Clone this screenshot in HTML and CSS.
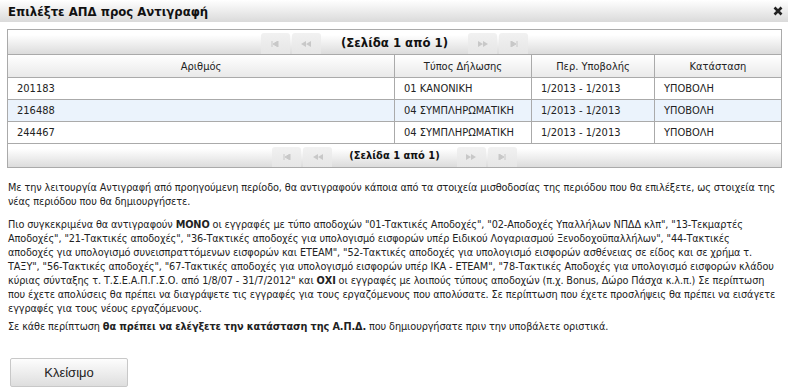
FILE: index.html
```html
<!DOCTYPE html>
<html lang="el">
<head>
    <meta charset="UTF-8">
    <meta name="viewport" content="width=device-width, initial-scale=1.0">
    <link rel="stylesheet" href="styles.css">
</head>
<body>
    <div class="dialog">
        <div class="dialog-title">
            <span>Επιλέξτε ΑΠΔ προς Αντιγραφή</span>
            <svg class="close" width="10" height="10" viewBox="0 0 10 10"><path d="M1.5 1.5 L8.5 8.5 M8.5 1.5 L1.5 8.5" stroke="#222" stroke-width="2.6"/></svg>
        </div>
        <div class="dialog-body">
            <div class="grid">
                <div class="pager pager-top">
                    <div class="pg-btn"><svg width="8" height="6" viewBox="0 0 8 6"><path d="M1 0v6M7 0v6L2 3z" stroke="#c8c8c8" fill="#c8c8c8" stroke-width="1"/></svg></div>
                    <div class="pg-btn"><svg width="10" height="6" viewBox="0 0 10 6"><path d="M5 0v6L0 3zM10 0v6L5 3z" fill="#c8c8c8"/></svg></div>
                    <div class="pg-text">(Σελίδα 1 από 1)</div>
                    <div class="pg-btn"><svg width="10" height="6" viewBox="0 0 10 6"><path d="M0 0v6L5 3zM5 0v6L10 3z" fill="#c8c8c8"/></svg></div>
                    <div class="pg-btn"><svg width="8" height="6" viewBox="0 0 8 6"><path d="M7 0v6M1 0v6L6 3z" stroke="#c8c8c8" fill="#c8c8c8" stroke-width="1"/></svg></div>
                </div>
                <table class="rows">
                    <thead>
                        <tr>
                            <th class="c1">Αριθμός</th>
                            <th class="c2">Τύπος Δήλωσης</th>
                            <th class="c3">Περ. Υποβολής</th>
                            <th class="c4">Κατάσταση</th>
                        </tr>
                    </thead>
                    <tbody>
                        <tr>
                            <td>201183</td>
                            <td>01 ΚΑΝΟΝΙΚΗ</td>
                            <td>1/2013 - 1/2013</td>
                            <td>ΥΠΟΒΟΛΗ</td>
                        </tr>
                        <tr class="selected">
                            <td>216488</td>
                            <td>04 ΣΥΜΠΛΗΡΩΜΑΤΙΚΗ</td>
                            <td>1/2013 - 1/2013</td>
                            <td>ΥΠΟΒΟΛΗ</td>
                        </tr>
                        <tr>
                            <td>244467</td>
                            <td>04 ΣΥΜΠΛΗΡΩΜΑΤΙΚΗ</td>
                            <td>1/2013 - 1/2013</td>
                            <td>ΥΠΟΒΟΛΗ</td>
                        </tr>
                    </tbody>
                </table>
                <div class="pager pager-bottom">
                    <div class="pg-btn"><svg width="8" height="6" viewBox="0 0 8 6"><path d="M1 0v6M7 0v6L2 3z" stroke="#c8c8c8" fill="#c8c8c8" stroke-width="1"/></svg></div>
                    <div class="pg-btn"><svg width="10" height="6" viewBox="0 0 10 6"><path d="M5 0v6L0 3zM10 0v6L5 3z" fill="#c8c8c8"/></svg></div>
                    <div class="pg-text">(Σελίδα 1 από 1)</div>
                    <div class="pg-btn"><svg width="10" height="6" viewBox="0 0 10 6"><path d="M0 0v6L5 3zM5 0v6L10 3z" fill="#c8c8c8"/></svg></div>
                    <div class="pg-btn"><svg width="8" height="6" viewBox="0 0 8 6"><path d="M7 0v6M1 0v6L6 3z" stroke="#c8c8c8" fill="#c8c8c8" stroke-width="1"/></svg></div>
                </div>
            </div>

            <p class="info info-first">Με την λειτουργία Αντιγραφή από προηγούμενη περίοδο, θα αντιγραφούν κάποια από τα στοιχεία μισθοδοσίας της περιόδου που θα επιλέξετε, ως στοιχεία της νέας περιόδου που θα δημιουργήσετε.</p>
            <p class="info info-details">Πιο συγκεκριμένα θα αντιγραφούν <b>ΜΟΝΟ</b> οι εγγραφές με τύπο αποδοχών "01-Τακτικές Αποδοχές", "02-Αποδοχές Υπαλλήλων ΝΠΔΔ κλπ", "13-Τεκμαρτές Αποδοχές", "21-Τακτικές αποδοχές", "36-Τακτικές αποδοχές για υπολογισμό εισφορών υπέρ Ειδικού Λογαριασμού Ξενοδοχοϋπαλλήλων", "44-Τακτικές αποδοχές για υπολογισμό συνεισπραττόμενων εισφορών και ΕΤΕΑΜ", "52-Τακτικές αποδοχές για υπολογισμό εισφορών ασθένειας σε είδος και σε χρήμα τ. ΤΑΞΥ", "56-Τακτικές αποδοχές", "67-Τακτικές αποδοχές για υπολογισμό εισφορών υπέρ ΙΚΑ - ΕΤΕΑΜ", "78-Τακτικές Αποδοχές για υπολογισμό εισφορών κλάδου κύριας σύνταξης τ. Τ.Σ.Ε.Α.Π.Γ.Σ.Ο. από 1/8/07 - 31/7/2012" και <b>ΟΧΙ</b> οι εγγραφές με λοιπούς τύπους αποδοχών (π.χ. Bonus, Δώρο Πάσχα κ.λ.π.) Σε περίπτωση που έχετε απολύσεις θα πρέπει να διαγράψετε τις εγγραφές για τους εργαζόμενους που απολύσατε. Σε περίπτωση που έχετε προσλήψεις θα πρέπει να εισάγετε εγγραφές για τους νέους εργαζόμενους.</p>
            <p class="info info-last">Σε κάθε περίπτωση <b>θα πρέπει να ελέγξετε την κατάσταση της Α.Π.Δ.</b> που δημιουργήσατε πριν την υποβάλετε οριστικά.</p>

            <div class="actions">
                <button class="btn">Κλείσιμο</button>
            </div>
        </div>
    </div>
</body>
</html>
```

FILE: styles.css
```css
body {
    margin: 0;
    padding: 0;
    background-color: #fff;
    font-family: "DejaVu Sans Condensed", "DejaVu Sans", sans-serif;
    font-size: 11px;
    color: #222;
}
.dialog {
    width: 788px;
}
.dialog-title {
    height: 22px;
    display: flex;
    align-items: center;
    justify-content: space-between;
    padding: 0 5px 0 8px;
    background: linear-gradient(#ffffff, #dadada);
    font-size: 13px;
    font-weight: bold;
    color: #111;
}
.dialog-title .close {
    display: block;
}
.dialog-body {
    padding: 7px 6px 0 7px;
}
.grid {
    border: 1px solid #aaa;
}
.pager {
    display: flex;
    justify-content: center;
    align-items: flex-end;
    background: linear-gradient(#ffffff 20%, #dcdcdc);
}
.pager-top {
    height: 24px;
    border-bottom: 1px solid #aaa;
}
.pager-bottom {
    height: 23px;
    border-top: 1px solid #aaa;
    margin-top: -1px;
}
.pg-btn {
    width: 29px;
    height: 21px;
    margin: 0 1px;
    border-radius: 3px 3px 0 0;
    background: linear-gradient(#f1f1f1, #e6e6e6);
    display: flex;
    align-items: center;
    justify-content: center;
}
.pager-bottom .pg-btn {
    height: 20px;
}
.pg-text {
    font-weight: bold;
    font-size: 13px;
    color: #111;
    align-self: center;
    padding: 0 19px;
}
.pager-bottom .pg-text {
    font-size: 11px;
    padding: 0 16px;
}
.rows {
    width: 100%;
    border-collapse: collapse;
    table-layout: fixed;
}
.rows th {
    height: 22px;
    padding: 0;
    font-weight: normal;
    color: #222;
    text-align: center;
    background: linear-gradient(#ffffff, #e9e9e9);
    border-left: 1px solid #aaa;
    border-bottom: 1px solid #aaa;
}
.rows td {
    height: 21px;
    padding: 0 9px;
    border-left: 1px solid #aaa;
    border-bottom: 1px solid #aaa;
    white-space: nowrap;
}
.rows th:first-child,
.rows td:first-child {
    border-left: none;
}
.rows .c1 { width: 386px; }
.rows .c2 { width: 136px; }
.rows .c3 { width: 122px; }
.rows tr.selected td {
    background-color: #ebf3fc;
}
.info {
    margin: 0 1px;
    font-size: 10.8px;
    line-height: 14px;
    letter-spacing: -0.1px;
}
.info-first {
    margin-top: 13px;
}
.info-details {
    margin-top: 9px;
    margin-right: 6px;
}
.info-last {
    margin-top: 4px;
}
.actions {
    padding-top: 24px;
    padding-left: 3px;
}
.btn {
    width: 118px;
    height: 29px;
    font-family: "Liberation Sans", Arial, sans-serif;
    font-size: 13px;
    color: #222;
    border: 1px solid #c8c8c8;
    border-radius: 2px;
    background: linear-gradient(#fdfdfd, #dedede);
}
```
